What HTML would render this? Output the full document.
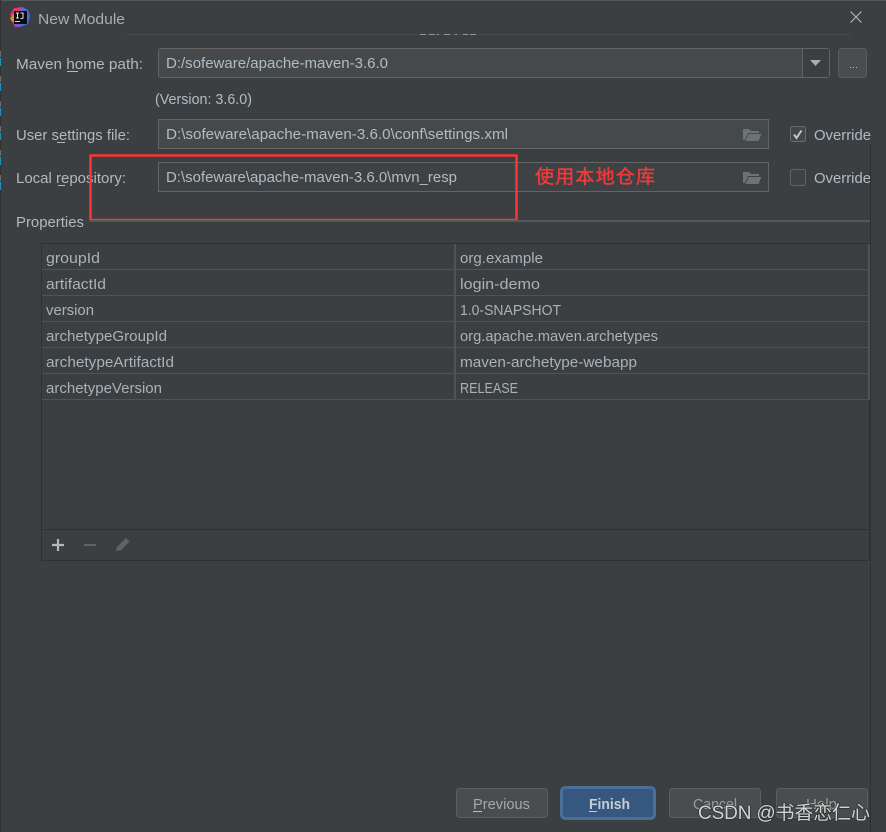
<!DOCTYPE html>
<html>
<head>
<meta charset="utf-8">
<style>
html,body{margin:0;padding:0;background:#3c3f41;width:886px;height:832px;overflow:hidden}
svg{display:block}
text{font-family:"Liberation Sans","Noto Sans CJK SC",sans-serif;font-size:14.5px;fill:#b4b8ba}
.v{fill:#b0bcc4}
.r{fill:#a8b2b8}
</style>
</head>
<body>
<svg width="886" height="832" viewBox="0 0 886 832" xmlns="http://www.w3.org/2000/svg">
<rect width="886" height="832" fill="#3c3f41"/>
<rect x="0" y="0" width="886" height="1" fill="#55585a"/>
<rect x="0" y="0" width="1" height="832" fill="#2f3133"/>
<g fill="#6a6d6f">
<rect x="0" y="51" width="1" height="6"/><rect x="0" y="76" width="1" height="6"/><rect x="0" y="101" width="1" height="6"/><rect x="0" y="126" width="1" height="6"/><rect x="0" y="150" width="1" height="6"/><rect x="0" y="175" width="1" height="6"/>
</g>
<g fill="#1f8fc4">
<rect x="0" y="58" width="1" height="8"/><rect x="0" y="83" width="1" height="8"/><rect x="0" y="108" width="1" height="8"/><rect x="0" y="133" width="1" height="7"/><rect x="0" y="157" width="1" height="8"/><rect x="0" y="182" width="1" height="8"/>
</g>
<rect x="127" y="34" width="723" height="1" fill="#4a4d4f"/>
<g fill="#8f9699">
<rect x="420" y="34" width="6" height="1"/><rect x="429" y="34" width="6" height="1"/><rect x="437" y="34" width="2" height="1"/><rect x="444" y="34" width="6" height="1"/><rect x="455" y="34" width="2" height="1"/><rect x="463" y="34" width="5" height="1"/><rect x="470" y="34" width="6" height="1"/>
</g>

<!-- IntelliJ logo -->
<g>
<path d="M10 15 L14 8 L23 7 L25 12 L14 20 Z" fill="#e8356d"/>
<path d="M10 18 L14 14 L18 23 L12 22 Z" fill="#f58220"/>
<path d="M22 7 L28 10 L30 16 L28 24 L20 27 L16 23 Z" fill="#3f6fe0"/>
<path d="M12 21 L21 27 L15 27 Z" fill="#b03fc4"/>
<rect x="14" y="11" width="13" height="13" fill="#0b0b0b"/>
<rect x="15" y="21" width="5" height="1" fill="#dddddd"/>
<path d="M16 13 h3 M17.500 13 v5 M16 18 h3 M20.500 13 h3 M23 13 v4.500 q0 1 -1 1 h-1.500" stroke="#e8e8e8" stroke-width="1" fill="none"/>
</g>
<text x="38" y="24" textLength="87" lengthAdjust="spacingAndGlyphs" style="fill:#a9adaf">New Module</text>
<path d="M850.500 11.500 L861.500 22.500 M861.500 11.500 L850.500 22.500" stroke="#b8babb" stroke-width="1.100" fill="none"/>

<!-- Maven home -->
<text x="16" y="69" textLength="127" lengthAdjust="spacingAndGlyphs">Maven home path:</text>
<rect x="67" y="71" width="11" height="1" fill="#b4b8ba"/>
<rect x="158.500" y="48.500" width="671" height="29" rx="2.500" fill="#45494a" stroke="#646464"/>
<rect x="802" y="49" width="1" height="28" fill="#646464"/>
<rect x="803" y="49" width="26" height="28" fill="#3c3f41"/>
<path d="M810 60 h11 l-5.500 6 z" fill="#a9adaf"/>
<text class="v" x="166" y="68" textLength="222" lengthAdjust="spacingAndGlyphs">D:/sofeware/apache-maven-3.6.0</text>
<rect x="838.500" y="48.500" width="28" height="29" rx="3" fill="#4a4d4f" stroke="#5a5d5f"/>
<rect x="850" y="67" width="1" height="1" fill="#bbbbbb"/><rect x="853" y="67" width="1" height="1" fill="#bbbbbb"/><rect x="856" y="67" width="1" height="1" fill="#bbbbbb"/>
<text class="v" x="155" y="104" textLength="97" lengthAdjust="spacingAndGlyphs">(Version: 3.6.0)</text>

<!-- User settings -->
<text x="16" y="140" textLength="114" lengthAdjust="spacingAndGlyphs">User settings file:</text>
<rect x="57" y="142" width="8" height="1" fill="#b4b8ba"/>
<rect x="158.500" y="119.500" width="610" height="29" fill="#45494a" stroke="#646464"/>
<text class="v" x="166" y="139" textLength="342" lengthAdjust="spacingAndGlyphs">D:\sofeware\apache-maven-3.6.0\conf\settings.xml</text>
<path d="M743 140 v-11 h6 l2 2 h8 v2 h-11 l-3 7 z" fill="#6b7375"/>
<path d="M745.500 141 l3 -7 h13 l-3 7 z" fill="#6b7375"/>
<rect x="790.500" y="126.500" width="15" height="15" rx="2" fill="#44474a" stroke="#6b6b6b"/>
<path d="M794 134.500 l2.500 3.500 l5 -7.500" stroke="#c6c6c6" stroke-width="2" fill="none"/>
<text class="v" x="814" y="140" textLength="57" lengthAdjust="spacingAndGlyphs">Override</text>

<!-- Local repository -->
<text x="16" y="183" textLength="110" lengthAdjust="spacingAndGlyphs">Local repository:</text>
<rect x="58" y="185" width="7" height="1" fill="#b4b8ba"/>
<rect x="158.500" y="162.500" width="610" height="29" fill="#3f4244" stroke="#646464"/>
<text class="v" x="166" y="182" textLength="291" lengthAdjust="spacingAndGlyphs">D:\sofeware\apache-maven-3.6.0\mvn_resp</text>
<path d="M743 183 v-11 h6 l2 2 h8 v2 h-11 l-3 7 z" fill="#6b7375"/>
<path d="M745.500 184 l3 -7 h13 l-3 7 z" fill="#6b7375"/>
<rect x="790.500" y="169.500" width="15" height="16" rx="2" fill="#3f4244" stroke="#636363"/>
<text class="v" x="814" y="183" textLength="57" lengthAdjust="spacingAndGlyphs">Override</text>

<!-- Annotation -->
<rect x="90.500" y="155.500" width="426" height="64.500" fill="none" stroke="#ff3333" stroke-width="2.500"/>
<text x="535" y="183" textLength="120" style="font-size:19px;fill:#f03a3a;stroke:#f03a3a;stroke-width:0.400px">使用本地仓库</text>

<!-- Properties -->
<text x="16" y="227" textLength="68" lengthAdjust="spacingAndGlyphs">Properties</text>
<rect x="90" y="220" width="780" height="2" fill="#55585a"/>

<!-- Table -->
<rect x="41.500" y="243.500" width="828" height="317" fill="#3c3f41" stroke="#2f3234"/>
<g fill="#505355">
<rect x="42" y="269" width="827" height="1"/>
<rect x="42" y="295" width="827" height="1"/>
<rect x="42" y="321" width="827" height="1"/>
<rect x="42" y="347" width="827" height="1"/>
<rect x="42" y="373" width="827" height="1"/>
<rect x="42" y="399" width="827" height="1"/>
<rect x="454" y="244" width="2" height="156"/>
<rect x="868" y="244" width="2" height="156"/>
</g>
<rect x="42" y="529" width="827" height="1" fill="#2f3234"/>
<text x="46" y="263" textLength="54" lengthAdjust="spacingAndGlyphs" class="r">groupId</text>
<text x="46" y="289" textLength="60" lengthAdjust="spacingAndGlyphs" class="r">artifactId</text>
<text x="46" y="315" textLength="48" lengthAdjust="spacingAndGlyphs" class="r">version</text>
<text x="46" y="341" textLength="121" lengthAdjust="spacingAndGlyphs" class="r">archetypeGroupId</text>
<text x="46" y="367" textLength="128" lengthAdjust="spacingAndGlyphs" class="r">archetypeArtifactId</text>
<text x="46" y="393" textLength="116" lengthAdjust="spacingAndGlyphs" class="r">archetypeVersion</text>
<text x="460" y="263" textLength="83" lengthAdjust="spacingAndGlyphs" class="r">org.example</text>
<text x="460" y="289" textLength="80" lengthAdjust="spacingAndGlyphs" class="r">login-demo</text>
<text x="460" y="315" textLength="101" lengthAdjust="spacingAndGlyphs" class="r">1.0-SNAPSHOT</text>
<text x="460" y="341" textLength="198" lengthAdjust="spacingAndGlyphs" class="r">org.apache.maven.archetypes</text>
<text x="460" y="367" textLength="177" lengthAdjust="spacingAndGlyphs" class="r">maven-archetype-webapp</text>
<text x="460" y="393" textLength="58" lengthAdjust="spacingAndGlyphs" class="r">RELEASE</text>

<!-- Toolbar -->
<path d="M52 545 h12 M58 539 v12" stroke="#b5b7b8" stroke-width="2.200"/>
<rect x="84" y="544" width="12" height="2" fill="#5f6365"/>
<path d="M116 551 l1 -4 l9 -9 l3.500 3.500 l-9 9 z" fill="#5f6365"/>

<!-- Buttons -->
<rect x="456.500" y="788.500" width="91" height="29" rx="3" fill="#4a4d4f" stroke="#5b5e60"/>
<text x="473" y="809" textLength="57" lengthAdjust="spacingAndGlyphs" style="fill:#a8a9a6">Previous</text>
<rect x="473" y="811" width="9" height="1" fill="#bbbbbb"/>
<rect x="561.500" y="787.500" width="93" height="31" rx="4" fill="#365880" stroke="#4a6f99" stroke-width="3"/>
<text x="589" y="809" textLength="41" lengthAdjust="spacingAndGlyphs" style="fill:#c8cdd2;font-weight:bold">Finish</text>
<rect x="589" y="811" width="8" height="1" fill="#c8cdd2"/>
<rect x="669.500" y="788.500" width="91" height="29" rx="3" fill="#4a4d4f" stroke="#5b5e60"/>
<text x="693" y="809" textLength="44" lengthAdjust="spacingAndGlyphs" style="fill:#9a9c9d">Cancel</text>
<rect x="776.500" y="788.500" width="91" height="29" rx="3" fill="#4a4d4f" stroke="#5b5e60"/>
<text x="806" y="809" textLength="31" lengthAdjust="spacingAndGlyphs" style="fill:#9a9c9d">Help</text>

<!-- Watermark -->
<text x="698" y="819" textLength="172" style="font-size:19px;fill:#d4d4d4;paint-order:stroke;stroke:#2d2f30;stroke-width:1.500px">CSDN @书香恋仁心</text>

<!-- Right line -->
<rect x="870" y="144" width="1" height="688" fill="#2e3032"/>
</svg>
</body>
</html>
